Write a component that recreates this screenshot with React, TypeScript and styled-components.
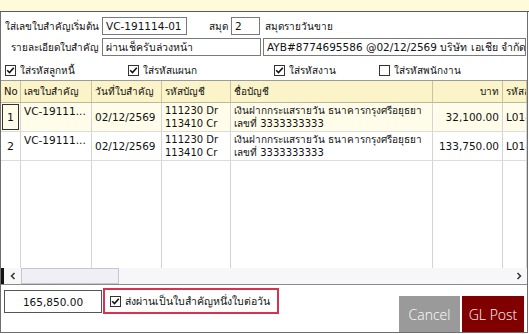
import React from "react";
import styled, { createGlobalStyle } from "styled-components";

const Global = createGlobalStyle`
  html, body { margin: 0; padding: 0; background: #fff; overflow: hidden; }
  body { font-family: "DejaVu Sans", Tahoma, sans-serif; font-size: 10px; color: #111; }
  * { box-sizing: border-box; }
`;

const Page = styled.div`
  width: 529px;
  height: 334px;
  display: flex;
  flex-direction: column;
`;

const TopStrip = styled.div`
  height: 12px;
  background: #fdfbd9;
  border-bottom: 1px solid #5a5a5a;
  flex: none;
`;

const Dialog = styled.div`
  width: 528px;
  height: 321px;
  border-left: 1px solid #6e6e6e;
  border-right: 1px solid #6e6e6e;
  border-bottom: 1px solid #6e6e6e;
  display: flex;
  flex-direction: column;
  flex: none;
`;

const Form = styled.div`
  height: 68px;
  display: flex;
  flex-direction: column;
  flex: none;
`;

const FieldRow = styled.div<{ $top: number }>`
  display: flex;
  align-items: center;
  height: 18px;
  margin-top: ${(p) => p.$top}px;
`;

const Label = styled.span<{ $w: number }>`
  width: ${(p) => p.$w}px;
  text-align: right;
  padding-right: 3px;
  white-space: nowrap;
  flex: none;
`;

const Text = styled.span<{ $ml?: number }>`
  margin-left: ${(p) => p.$ml ?? 0}px;
  white-space: nowrap;
`;

const Input = styled.div<{ $w: number; $ml?: number }>`
  width: ${(p) => p.$w}px;
  margin-left: ${(p) => p.$ml ?? 0}px;
  height: 18px;
  border: 1px solid #7a7a7a;
  background: #fff;
  padding: 0 3px;
  display: flex;
  align-items: center;
  white-space: nowrap;
  overflow: hidden;
  font-size: 10.5px;
  flex: none;
`;

const CheckRow = styled.div`
  display: flex;
  align-items: center;
  height: 12px;
  margin-top: 8px;
  padding-left: 4px;
`;

const CheckItem = styled.label<{ $w?: number }>`
  display: flex;
  align-items: center;
  gap: 4px;
  width: ${(p) => (p.$w ? `${p.$w}px` : "auto")};
  white-space: nowrap;
  flex: none;
`;

const Box = styled.span`
  width: 11px;
  height: 11px;
  border: 1px solid #333;
  background: #fff;
  display: inline-flex;
  align-items: center;
  justify-content: center;
  flex: none;
`;

const Check = ({ on }: { on: boolean }) => (
  <Box>
    {on && (
      <svg width="9" height="9" viewBox="0 0 9 9">
        <path d="M1.2 4.2 L3.5 6.5 L7.8 1.8" stroke="#111" strokeWidth="1.6" fill="none" />
      </svg>
    )}
  </Box>
);

const Table = styled.div`
  height: 188px;
  display: grid;
  grid-template-columns: 20px 71px 70px 69px 202px 70px 1fr;
  grid-template-rows: 22px 29px 29px 1fr;
  border-top: 1px solid #9a9a9a;
  flex: none;
  overflow: hidden;
`;

const HeadCell = styled.div<{ $right?: boolean }>`
  background: #fcf4c9;
  border-right: 1px solid #c9c3a4;
  border-bottom: 1px solid #bcb8a0;
  display: flex;
  align-items: center;
  justify-content: ${(p) => (p.$right ? "flex-end" : "flex-start")};
  padding: 0 3px;
  white-space: nowrap;
  overflow: hidden;
`;

const Cell = styled.div<{ $alt?: boolean; $align?: string; $right?: boolean; $size?: number }>`
  background: ${(p) => (p.$alt ? "#fffdea" : "#fff")};
  border-right: 1px solid #d4d4d4;
  border-bottom: 1px solid #dcdcdc;
  display: flex;
  flex-direction: column;
  justify-content: ${(p) => p.$align ?? "center"};
  align-items: ${(p) => (p.$right ? "flex-end" : "flex-start")};
  padding: 2px 3px;
  line-height: 13px;
  font-size: ${(p) => p.$size ?? 10}px;
  white-space: nowrap;
  overflow: hidden;
`;

const NoCell = styled.div<{ $alt?: boolean }>`
  background: ${(p) => (p.$alt ? "#fffdea" : "#fff")};
  border-right: 1px solid #d4d4d4;
  border-bottom: 1px solid #dcdcdc;
  padding: 1px;
  display: flex;
`;

const NoInner = styled.div<{ $sel?: boolean }>`
  flex: 1;
  border: 1px solid ${(p) => (p.$sel ? "#333" : "transparent")};
  display: flex;
  align-items: center;
  justify-content: center;
  font-size: 11px;
`;

const FillCell = styled.div`
  border-right: 1px solid #d4d4d4;
`;

const ScrollBar = styled.div`
  height: 17px;
  display: flex;
  background: #f7f7f9;
  border-bottom: 1px solid #8a8a8a;
  flex: none;
`;

const ScrollMark = styled.div`
  width: 3px;
  background: #111;
`;

const ScrollBtn = styled.div<{ $ml?: string }>`
  width: 17px;
  margin-left: ${(p) => p.$ml ?? "0"};
  display: flex;
  align-items: center;
  justify-content: center;
`;

const Thumb = styled.div`
  width: 98px;
  background: #f1eff6;
  border: 1px solid #c6c6cc;
`;

const Arrow = ({ dir }: { dir: "left" | "right" }) => (
  <svg width="6" height="8" viewBox="0 0 6 8">
    <path
      d={dir === "left" ? "M4.5 1 L1.5 4 L4.5 7" : "M1.5 1 L4.5 4 L1.5 7"}
      stroke="#333"
      strokeWidth="1.5"
      fill="none"
    />
  </svg>
);

const Footer = styled.div`
  flex: 1;
  display: flex;
  align-items: flex-start;
  padding-left: 3px;
  padding-right: 3px;
`;

const Total = styled.div`
  width: 98px;
  height: 23px;
  margin-top: 5px;
  border: 1px solid #555;
  display: flex;
  align-items: center;
  justify-content: center;
  font-size: 10.5px;
`;

const Highlight = styled.div`
  width: 176px;
  height: 26px;
  margin-top: 3px;
  margin-left: 1px;
  border: 2px solid #d8324e;
  display: flex;
  align-items: center;
  padding-left: 5px;
  gap: 4px;
  white-space: nowrap;
  font-size: 10.5px;
`;

const Buttons = styled.div`
  margin-left: auto;
  align-self: flex-end;
  display: flex;
  gap: 2px;
`;

const Button = styled.div<{ $bg: string; $w: number }>`
  width: ${(p) => p.$w}px;
  height: 36px;
  background: ${(p) => p.$bg};
  color: #fff;
  display: flex;
  align-items: center;
  justify-content: center;
  font-family: "Open Sans", "Noto Sans", sans-serif;
  font-size: 14px;
  font-weight: 300;
`;

const rows = [
  { no: "1", amount: "32,100.00", alt: true, sel: true },
  { no: "2", amount: "133,750.00", alt: false, sel: false },
];

export default function App() {
  return (
    <Page>
      <Global />
      <TopStrip />
      <Dialog>
        <Form>
          <FieldRow $top={5}>
            <Label $w={101}>ใส่เลขใบสำคัญเริ่มต้น</Label>
            <Input $w={85}>VC-191114-01</Input>
            <Label $w={44}>สมุด</Label>
            <Input $w={29}>2</Input>
            <Text $ml={5}>สมุดรายวันขาย</Text>
          </FieldRow>
          <FieldRow $top={3}>
            <Label $w={101}>รายละเอียดใบสำคัญ</Label>
            <Input $w={159}>ผ่านเช็ครับล่วงหน้า</Input>
            <Input $w={263} $ml={2}>AYB#8774695586 @02/12/2569 บริษัท เอเชีย จำกัด</Input>
          </FieldRow>
          <CheckRow>
            <CheckItem $w={123}>
              <Check on />
              ใส่รหัสลูกหนี้
            </CheckItem>
            <CheckItem $w={146}>
              <Check on />
              ใส่รหัสแผนก
            </CheckItem>
            <CheckItem $w={105}>
              <Check on />
              ใส่รหัสงาน
            </CheckItem>
            <CheckItem>
              <Check on={false} />
              ใส่รหัสพนักงาน
            </CheckItem>
          </CheckRow>
        </Form>
        <Table>
          <HeadCell>No</HeadCell>
          <HeadCell>เลขใบสำคัญ</HeadCell>
          <HeadCell>วันที่ใบสำคัญ</HeadCell>
          <HeadCell>รหัสบัญชี</HeadCell>
          <HeadCell>ชื่อบัญชี</HeadCell>
          <HeadCell $right>บาท</HeadCell>
          <HeadCell>รหัสลูกหนี้</HeadCell>
          {rows.map((r) => (
            <React.Fragment key={r.no}>
              <NoCell $alt={r.alt}>
                <NoInner $sel={r.sel}>{r.no}</NoInner>
              </NoCell>
              <Cell $alt={r.alt} $align="flex-start" $size={10.5}>VC-19111...</Cell>
              <Cell $alt={r.alt} $size={10.5}>02/12/2569</Cell>
              <Cell $alt={r.alt}>
                <span>111230 Dr</span>
                <span>113410 Cr</span>
              </Cell>
              <Cell $alt={r.alt}>
                <span>เงินฝากกระแสรายวัน ธนาคารกรุงศรีอยุธยา</span>
                <span>เลขที่ 3333333333</span>
              </Cell>
              <Cell $alt={r.alt} $right $size={10.5}>{r.amount}</Cell>
              <Cell $alt={r.alt} $size={10.5}>L01-A</Cell>
            </React.Fragment>
          ))}
          <FillCell />
          <FillCell />
          <FillCell />
          <FillCell />
          <FillCell />
          <FillCell />
          <FillCell />
        </Table>
        <ScrollBar>
          <ScrollMark />
          <ScrollBtn>
            <Arrow dir="left" />
          </ScrollBtn>
          <Thumb />
          <ScrollBtn $ml="auto">
            <Arrow dir="right" />
          </ScrollBtn>
        </ScrollBar>
        <Footer>
          <Total>165,850.00</Total>
          <Highlight>
            <Check on />
            ส่งผ่านเป็นใบสำคัญหนึ่งใบต่อวัน
          </Highlight>
          <Buttons>
            <Button $bg="#9a9a9a" $w={61}>Cancel</Button>
            <Button $bg="#800000" $w={62}>GL Post</Button>
          </Buttons>
        </Footer>
      </Dialog>
    </Page>
  );
}
